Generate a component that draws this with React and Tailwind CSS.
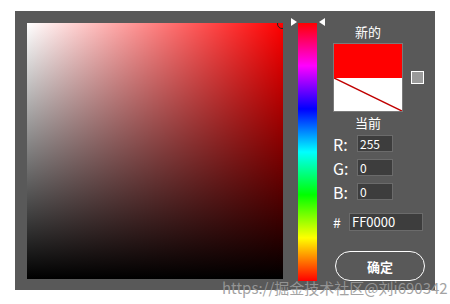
import React from 'react';

const font = { fontFamily: '"Noto Sans CJK SC", "Liberation Sans", sans-serif' };

const Field = ({ label, value }) => (
  <div className="flex items-center h-[17px]">
    <span className="w-[24px] text-[16px] leading-none text-white">{label}</span>
    <div className="w-[36px] h-[17px] bg-[#3d3d3d] border border-[#6b6b6b] pl-[2px] text-[12px] leading-[15px] text-white">
      {value}
    </div>
  </div>
);

export default function App() {
  return (
    <div className="w-[450px] h-[304px] bg-white pt-[11px] pl-[15px] relative overflow-hidden" style={font}>
      <div className="w-[420px] h-[279px] bg-[#595959] pt-[12px] pl-[12px] flex">
        {/* saturation / value square */}
        <div className="relative w-[256px] h-[256px] bg-[#ff0000] overflow-hidden">
          <div className="absolute inset-0 bg-gradient-to-r from-white to-transparent" />
          <div className="absolute inset-0 bg-gradient-to-b from-transparent to-black" />
          <div className="absolute right-[-4px] top-[-4px] w-[10px] h-[10px] rounded-full border border-[#222]" />
        </div>

        {/* hue bar */}
        <div className="relative ml-[15px] w-[19px] h-[258px]">
          <div className="w-full h-full bg-[linear-gradient(to_bottom,#ff0000,#ff00ff_16.6%,#0000ff_33.3%,#00ffff_50%,#00ff00_66.6%,#ffff00_83.3%,#ff0000)]" />
          <div className="absolute left-[-7px] top-[-5px] w-0 h-0 border-y-[4px] border-y-transparent border-l-[6px] border-l-white" />
          <div className="absolute right-[-8px] top-[-5px] w-0 h-0 border-y-[4px] border-y-transparent border-r-[6px] border-r-white" />
        </div>

        {/* right column */}
        <div className="ml-[16px] w-[92px] flex flex-col">
          <div className="w-[70px] text-center text-[13px] leading-none text-white mt-[2px]">新的</div>
          <div className="flex items-center mt-[5px]">
            <div className="relative w-[70px] h-[69px] border border-[#7a7a7a]">
              <div className="h-[34px] bg-[#ff0000]" />
              <svg className="block" width="68" height="33" viewBox="0 0 68 33">
                <rect width="68" height="33" fill="#fff" />
                <line x1="0" y1="0" x2="68" y2="33" stroke="#c00000" strokeWidth="1.5" />
              </svg>
            </div>
            <div className="ml-[8px] w-[13px] h-[13px] bg-[#9a9a9a] border border-white" />
          </div>
          <div className="w-[70px] text-center text-[13px] leading-none text-white mt-[4px]">当前</div>
          <div className="flex flex-col gap-[7px] mt-[6px]">
            <Field label="R:" value="255" />
            <Field label="G:" value="0" />
            <Field label="B:" value="0" />
          </div>
          <div className="flex items-center mt-[13px] h-[18px]">
            <span className="w-[16px] text-[14px] leading-none text-white">#</span>
            <div className="w-[74px] h-[18px] bg-[#3d3d3d] border border-[#6b6b6b] pl-[2px] text-[13px] leading-[16px] text-white">
              FF0000
            </div>
          </div>
          <button className="mt-[20px] ml-[2px] w-[90px] h-[30px] rounded-full border border-white text-white text-[13px] leading-none font-bold">
            确定
          </button>
        </div>
      </div>
      <div className="absolute left-[222px] top-[280px] text-[15px] leading-none text-[#9a9a9a] opacity-90 whitespace-nowrap">
        https://掘金技术社区@刘i690342
      </div>
    </div>
  );
}
